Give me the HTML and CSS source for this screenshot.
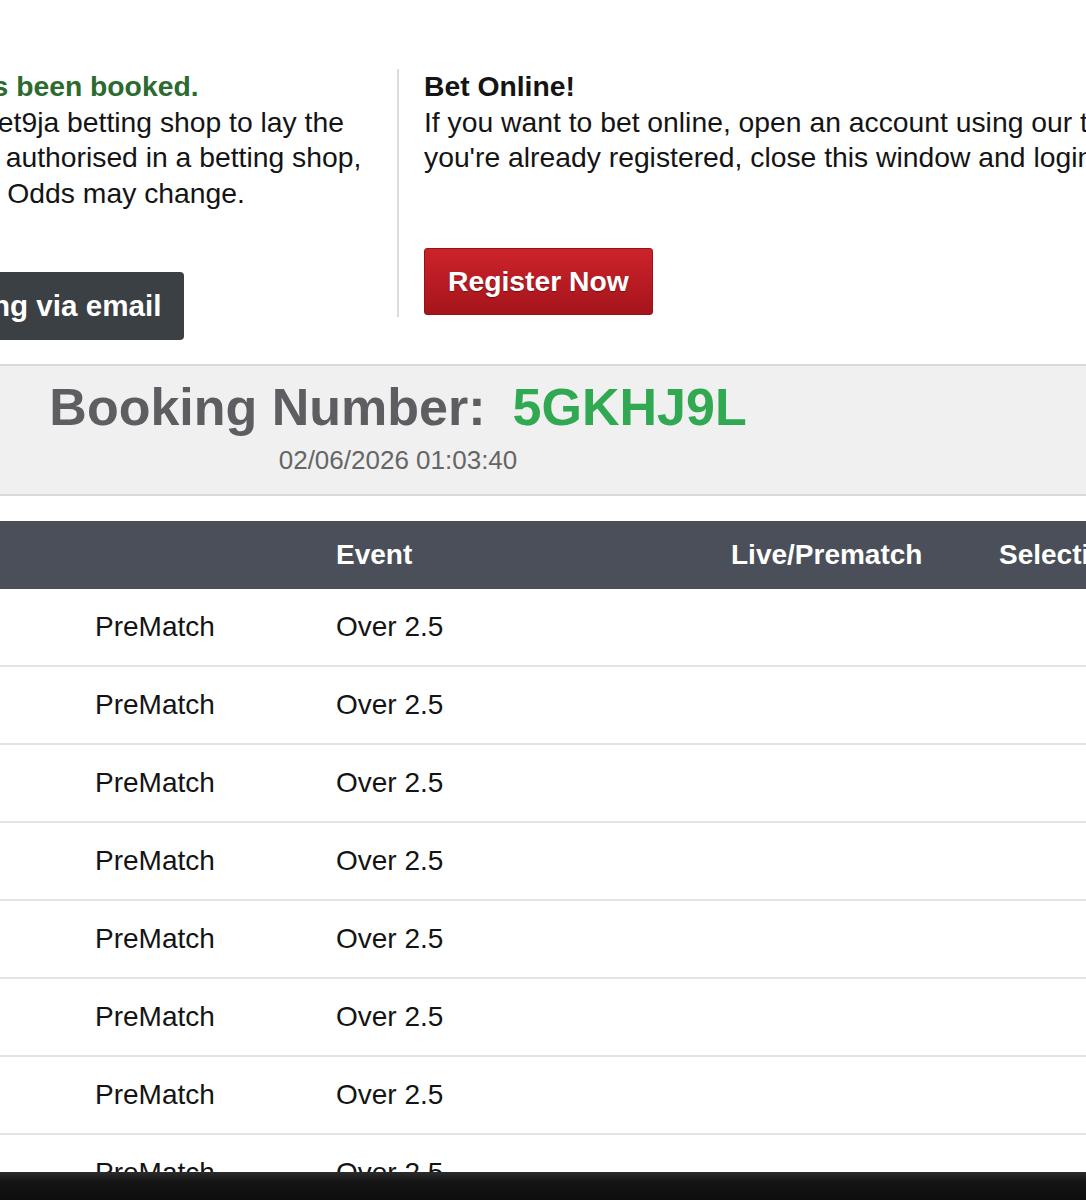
FILE: index.html
```html
<!DOCTYPE html>
<html lang="en">
<head>
<meta charset="utf-8">
<title>Bet Booked</title>
<link rel="stylesheet" href="styles.css">
</head>
<body>
<div class="page">
  <div class="modal">
    <section class="intro">
      <div class="intro-col shop">
        <p class="lines"><span class="booked">Your bet has been booked.</span><br>Go to your Bet9ja betting shop to lay the<br>bet. It is only authorised in a betting shop,<br>once placed. Odds may change.</p>
        <button class="btn btn-email" type="button">Get booking via email</button>
      </div>
      <div class="intro-col online">
        <p class="lines"><strong>Bet Online!</strong><br>If you want to bet online, open an account using our two-step registration form. If<br>you're already registered, close this window and login.</p>
        <button class="btn btn-register" type="button">Register Now</button>
      </div>
    </section>

    <section class="booking">
      <div class="booking-inner">
        <div class="booking-number"><span class="label">Booking Number:</span><span class="code">5GKHJ9L</span></div>
        <div class="booking-date">02/06/2026 01:03:40</div>
      </div>
    </section>

    <div class="bets">
      <div class="bets-row bets-head"><span>No.</span><span></span><span>Event</span><span>Live/Prematch</span><span>Selection</span></div>
      <div class="bets-row bets-item"><span>1</span><span>PreMatch</span><span>Over 2.5</span><span></span><span></span></div>
      <div class="bets-row bets-item"><span>2</span><span>PreMatch</span><span>Over 2.5</span><span></span><span></span></div>
      <div class="bets-row bets-item"><span>3</span><span>PreMatch</span><span>Over 2.5</span><span></span><span></span></div>
      <div class="bets-row bets-item"><span>4</span><span>PreMatch</span><span>Over 2.5</span><span></span><span></span></div>
      <div class="bets-row bets-item"><span>5</span><span>PreMatch</span><span>Over 2.5</span><span></span><span></span></div>
      <div class="bets-row bets-item"><span>6</span><span>PreMatch</span><span>Over 2.5</span><span></span><span></span></div>
      <div class="bets-row bets-item"><span>7</span><span>PreMatch</span><span>Over 2.5</span><span></span><span></span></div>
      <div class="bets-row bets-item"><span>8</span><span>PreMatch</span><span>Over 2.5</span><span></span><span></span></div>
    </div>
  </div>
</div>
<div class="system-bar"></div>
</body>
</html>
```

FILE: styles.css
```css
html,
body {
  margin: 0;
  padding: 0;
}

body {
  background: #ffffff;
  color: #141414;
  font-family: "Liberation Sans", Arial, Helvetica, sans-serif;
  height: 1200px;
  overflow: hidden;
}

.page {
  width: 1086px;
  overflow: hidden;
}

/* the booking dialog is wider than the window and scrolled sideways */
.modal {
  width: 1400px;
  margin-left: -185px;
  padding-top: 69px;
}

/* ---- top: shop info / online info ---- */
.intro {
  display: grid;
  grid-template-columns: 582px 1fr;
  align-items: start;
}

.intro-col {
  font-size: 28.3px;
  line-height: 35.7px;
}

.lines {
  margin: 0;
  white-space: nowrap;
}

.shop {
  padding: 0 24px;
}

.online {
  border-left: 2px solid #dcdcdc;
  padding: 0 0 2px 25px;
}

.booked {
  color: #2c6a2f;
  font-weight: bold;
}

.btn {
  display: block;
  font-family: inherit;
  font-size: 28.3px;
  font-weight: bold;
  line-height: 35.7px;
  color: #ffffff;
  border: none;
  white-space: nowrap;
  cursor: pointer;
}

.btn-email {
  margin-top: 60px;
  padding: 16px 23px 16.3px 16.5px;
  font-size: 29.6px;
  background: #3b4045;
  border-radius: 4px;
}

.btn-register {
  margin-top: 72px;
  padding: 15.15px 23px 14.15px;
  background: linear-gradient(#cd232b, #a5141b);
  border: 1px solid #98111a;
  border-radius: 3px;
  text-shadow: 0 1px 1px rgba(0, 0, 0, 0.35);
}

/* ---- booking number band ---- */
.booking {
  margin-top: 24px;
  background: #f0f0f0;
  border-top: 2px solid #d9d9d9;
  border-bottom: 2px solid #d9d9d9;
  padding: 13px 0 20px;
}

.booking-inner {
  width: 1166px;
  text-align: center;
}

.booking-number {
  font-size: 52px;
  line-height: 57.5px;
  font-weight: bold;
  white-space: nowrap;
}

.label {
  color: #5d5d62;
}

.code {
  color: #31a852;
  margin-left: 27px;
}

.booking-date {
  margin-top: 9.5px;
  font-size: 26px;
  line-height: 28px;
  color: #666666;
}

/* ---- selections table ---- */
.bets {
  margin-top: 25px;
}

.bets-row {
  display: grid;
  grid-template-columns: 268px 241px 395px 268px 1fr;
  align-items: center;
  font-size: 28px;
}

.bets-row > span {
  padding-left: 12px;
  white-space: nowrap;
}

.bets-head {
  height: 68px;
  background: #4a4f5a;
  color: #ffffff;
  font-weight: bold;
}

.bets-item {
  height: 76px;
  border-bottom: 2px solid #e4e4e4;
  color: #141414;
}

/* device navigation strip along the bottom edge */
.system-bar {
  position: fixed;
  left: 0;
  right: 0;
  bottom: 0;
  height: 28px;
  background: linear-gradient(#2c2c2c, #141414 35%, #0e0e0e);
}
```
